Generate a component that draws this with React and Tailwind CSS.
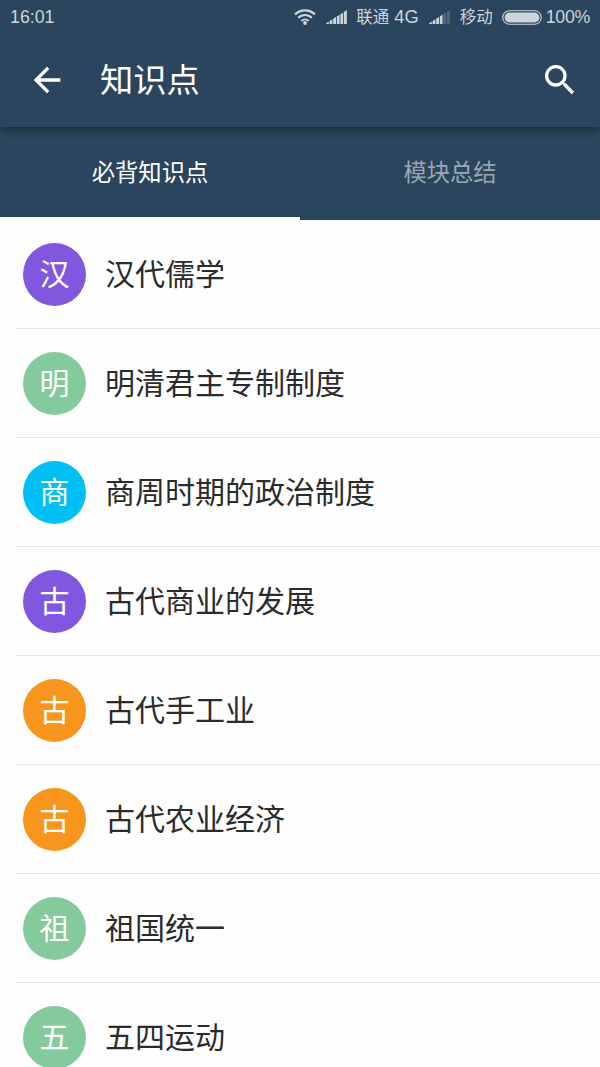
import React, { useState } from "react";

const TABS = ["必背知识点", "模块总结"];

const TOPICS = [
  { title: "汉代儒学", color: "bg-[#8157e0]" },
  { title: "明清君主专制制度", color: "bg-[#84ca9c]" },
  { title: "商周时期的政治制度", color: "bg-[#00bff5]" },
  { title: "古代商业的发展", color: "bg-[#8157e0]" },
  { title: "古代手工业", color: "bg-[#f8951d]" },
  { title: "古代农业经济", color: "bg-[#f8951d]" },
  { title: "祖国统一", color: "bg-[#84ca9c]" },
  { title: "五四运动", color: "bg-[#84ca9c]" },
];

const WifiIcon = () => (
  <svg width="22" height="16" viewBox="0 0 22 16" fill="none" stroke="currentColor" strokeWidth="2.2">
    <path d="M1 5.4a14.2 14.2 0 0 1 20 0" />
    <path d="M4.2 8.8a9.6 9.6 0 0 1 13.6 0" />
    <path d="M7.4 12a5.1 5.1 0 0 1 7.2 0" />
    <circle cx="11" cy="14" r="1.9" fill="currentColor" stroke="none" />
  </svg>
);

// level = number of lit bars out of six
const SignalIcon = ({ level }) => (
  <svg width="21" height="14" viewBox="0 0 21 14" fill="currentColor">
    {[0, 1, 2, 3, 4, 5].map((i) => (
      <path
        key={i}
        d={`M${i * 3.6} 14v${-(0.6 + i * 2.3)}l2.8 -1.8v${2.4 + i * 2.3}z`}
        opacity={i < level ? 1 : 0.25}
      />
    ))}
  </svg>
);

const BatteryIcon = () => (
  <svg width="40" height="15" viewBox="0 0 40 15" fill="none">
    <rect x="0.75" y="0.75" width="38.5" height="13.5" rx="6.75" stroke="currentColor" strokeWidth="1.1" />
    <rect x="2.6" y="2.6" width="34.8" height="9.8" rx="4.9" fill="currentColor" />
  </svg>
);

const StatusBar = () => (
  <div className="flex h-[35px] items-center pl-[10px] pr-[10px] text-[17.8px] leading-none text-[#cdd4da]">
    <span>16:01</span>
    <div className="ml-auto flex items-center">
      <WifiIcon />
      <span className="ml-[10px]"><SignalIcon level={6} /></span>
      <span className="ml-[9px] flex items-center whitespace-nowrap">
        <span className="text-[16.5px]">联通</span>
        <span className="ml-[5px] text-[18.3px]">4G</span>
      </span>
      <span className="ml-[10px]"><SignalIcon level={4} /></span>
      <span className="ml-[10px] whitespace-nowrap text-[16.5px]">移动</span>
      <span className="ml-[9px]"><BatteryIcon /></span>
      <span className="ml-[4px] tracking-[-0.3px]">100%</span>
    </div>
  </div>
);

const AppBar = () => (
  <header className="relative z-10 h-[127px] bg-[#2a455d] shadow-[0_3px_9px_rgba(0,0,0,0.4)]">
    <StatusBar />
    <div className="flex h-[90px] items-center pl-[27px] pr-[20px] text-white">
      <button type="button" aria-label="返回">
        <svg width="40" height="40" viewBox="0 0 24 24" fill="currentColor">
          <path d="M20 11H7.83l5.59-5.59L12 4l-8 8 8 8 1.41-1.41L7.83 13H20v-2z" />
        </svg>
      </button>
      <h1 className="ml-[33px] pt-px text-[33.3px] leading-none">知识点</h1>
      <button type="button" aria-label="搜索" className="ml-auto">
        <svg width="40" height="40" viewBox="0 0 24 24" fill="currentColor">
          <path d="M15.5 14h-.79l-.28-.27A6.471 6.471 0 0 0 16 9.5 6.5 6.5 0 1 0 9.5 16c1.61 0 3.09-.59 4.23-1.57l.27.28v.79l5 4.99L20.49 19l-4.99-5zm-6 0C7.01 14 5 11.99 5 9.5S7.01 5 9.5 5 14 7.01 14 9.5 11.99 14 9.5 14z" />
        </svg>
      </button>
    </div>
  </header>
);

const TopicRow = ({ title, color }) => (
  <li className="ml-4 flex h-[109px] items-center border-b border-[#e6e6e6] pl-[7px]">
    <span className={`flex size-[63px] shrink-0 items-center justify-center rounded-full pt-0.5 text-[30px] leading-none text-white ${color}`}>
      {title[0]}
    </span>
    <span className="ml-[19px] pt-0.5 text-[30px] leading-none text-[#2b2b2b]">{title}</span>
  </li>
);

export default function App() {
  const [active, setActive] = useState(0);

  return (
    <div className="h-[1067px] w-[600px] overflow-hidden bg-[#fefefe] font-['Liberation_Sans','Noto_Sans_CJK_SC',sans-serif]">
      <AppBar />
      <nav className="flex h-[93px] bg-[#2a455d]">
        {TABS.map((tab, i) => (
          <button
            key={tab}
            type="button"
            onClick={() => setActive(i)}
            className={`flex-1 border-b-[3px] pt-[3px] text-[23.3px] leading-none ${
              i === active ? "border-[#fefefe] text-white" : "border-transparent text-[#9aa7b2]"
            }`}
          >
            {tab}
          </button>
        ))}
      </nav>
      <ul>
        {TOPICS.map((topic) => (
          <TopicRow key={topic.title} {...topic} />
        ))}
      </ul>
    </div>
  );
}
